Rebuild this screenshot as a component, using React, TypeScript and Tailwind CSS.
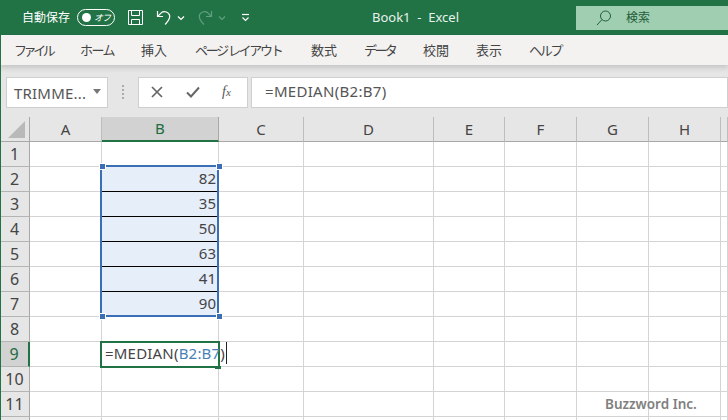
const FONT = "font-['Noto_Sans','Noto_Sans_CJK_JP',sans-serif]";
const TABS: [string, string, string][] = [
    ['ファイル', 'w-[66px]', 'tracking-[-3.4px]'],
    ['ホーム', 'w-[61px]', 'tracking-[-1.6px]'],
    ['挿入', 'w-[54px]', ''],
    ['ページ レイアウト', 'w-[116px]', 'tracking-[-2.3px]'],
    ['数式', 'w-[53px]', ''],
    ['データ', 'w-[59px]', 'tracking-[-2.6px]'],
    ['校閲', 'w-[53px]', ''],
    ['表示', 'w-[53px]', ''],
    ['ヘルプ', 'w-[40px]', 'tracking-[-2.2px]'],
];
const COLUMNS: [string, string][] = [
    ['A', 'w-[72px]'],
    ['B', 'w-[117px]'],
    ['C', 'w-[85px]'],
    ['D', 'w-[130px]'],
    ['E', 'w-[71px]'],
    ['F', 'w-[72px]'],
    ['G', 'w-[72px]'],
    ['H', 'w-[72px]'],
    ['', 'w-[7px]'],
];
const VALUES: Record<number, number> = { 2: 82, 3: 35, 4: 50, 5: 63, 6: 41, 7: 90 };
const ROWS = [1, 2, 3, 4, 5, 6, 7, 8, 9, 10, 11, 12];

function TitleIcons() {
    return (
        <div className="flex items-center">
            <svg width="17" height="17" viewBox="0 0 17 17" fill="none" stroke="#fff" strokeWidth="1" className="ml-[12px]">
                <path d="M1.5 1.5h14v14h-14z" />
                <path d="M4.5 1.5v5h8v-5M4.5 15.5v-5h8v5" />
            </svg>
            <svg width="16" height="18" viewBox="0 0 16 18" fill="none" stroke="#fff" strokeWidth="1.2" className="ml-[12px]">
                <path d="M1.5 2v5.5H7" />
                <path d="M1.8 7.2 5.5 3.6c2.6-2 7.6-.8 8.2 3.2.4 3.2-2 6-4.6 8.7" />
            </svg>
            <svg width="8" height="6" viewBox="0 0 8 6" fill="none" stroke="#fff" strokeWidth="1.2" className="ml-[5px]">
                <path d="M1 1.5 4 4.5 7 1.5" />
            </svg>
            <svg width="16" height="18" viewBox="0 0 16 18" fill="none" stroke="#5f9f7f" strokeWidth="1.2" className="ml-[12px]">
                <path d="M14.5 2v5.5H9" />
                <path d="M14.2 7.2 10.5 3.6c-2.6-2-7.6-.8-8.2 3.2-.4 3.2 2 6 4.6 8.7" />
            </svg>
            <svg width="8" height="6" viewBox="0 0 8 6" fill="none" stroke="#5f9f7f" strokeWidth="1.2" className="ml-[5px]">
                <path d="M1 1.5 4 4.5 7 1.5" />
            </svg>
            <svg width="9" height="9" viewBox="0 0 9 9" fill="none" stroke="#fff" strokeWidth="1.2" className="ml-[15px]">
                <path d="M1 1.5h7" />
                <path d="M1.5 4.5 4.5 7.5 7.5 4.5" />
            </svg>
        </div>
    );
}

function TitleBar() {
    return (
        <div className="h-[35px] shrink-0 bg-[#217346] flex items-center text-white text-[12px]">
            <span className="ml-[22px] w-[55px] whitespace-nowrap">自動保存</span>
            <div className="w-[38px] h-[17px] rounded-full border border-white flex items-center justify-between pl-[4px] pr-[4px]">
                <div className="w-[9px] h-[9px] rounded-full bg-white" />
                <span className="text-[9px] leading-none tracking-[-1px] italic">オフ</span>
            </div>
            <TitleIcons />
            <span className="ml-[122px] w-[204px] whitespace-nowrap text-[13px] text-[#e8f2ec]">Book1 &nbsp;-&nbsp; Excel</span>
            <div className="h-[24px] flex-1 bg-[#9fcfb0] flex items-center text-[#1f5c3c] text-[12px]">
                <svg width="16" height="16" viewBox="0 0 16 16" fill="none" stroke="#1f5c3c" strokeWidth="1" className="ml-[20px]">
                    <circle cx="9.5" cy="6" r="5" />
                    <path d="M6 9.5 1 15" />
                </svg>
                <span className="ml-[14px]">検索</span>
            </div>
        </div>
    );
}

function RibbonTabs() {
    return (
        <div className="h-[30px] shrink-0 bg-[#f3f2f1] flex items-center text-[#444] text-[13px] pl-[14px] pt-[1px] shadow-[0_3px_5px_rgba(0,0,0,0.14)] relative">
            {TABS.map(([label, width, tracking]) => (
                <span key={label} className={`${width} ${tracking} shrink-0 whitespace-nowrap`}>
                    {label}
                </span>
            ))}
        </div>
    );
}

function FormulaBar() {
    return (
        <div className="h-[51px] shrink-0 bg-[#e6e6e6] flex items-center pl-[6px] pt-[1px]">
            <div className="w-[102px] h-[31px] bg-white border border-[#cfcfcf] flex items-center justify-between pl-[7px] pr-[6px] pt-[3px] text-[15px] text-[#555]">
                <span className="whitespace-nowrap tracking-[0.2px]">TRIMME...</span>
                <svg width="8" height="5" viewBox="0 0 8 5" fill="#777" className="mb-[5px]"><path d="M0 0h8L4 5z" /></svg>
            </div>
            <div className="w-[30px] flex flex-col items-center gap-[2px]">
                <div className="w-[2px] h-[2px] bg-[#aaa]" />
                <div className="w-[2px] h-[2px] bg-[#aaa]" />
                <div className="w-[2px] h-[2px] bg-[#aaa]" />
                <div className="w-[2px] h-[2px] bg-[#aaa]" />
            </div>
            <div className="w-[110px] h-[31px] bg-white border border-[#cfcfcf] flex items-center">
                <svg width="12" height="12" viewBox="0 0 12 12" fill="none" stroke="#666" strokeWidth="1.7" className="ml-[12px]">
                    <path d="M1 1l10 10M11 1 1 11" />
                </svg>
                <svg width="14" height="12" viewBox="0 0 14 12" fill="none" stroke="#666" strokeWidth="2" className="ml-[23px]">
                    <path d="M1 6.5 5 10.5 13 1.5" />
                </svg>
                <span className="ml-[22px] font-['Liberation_Serif',serif] italic text-[14px] leading-none text-[#555]">f<span className="text-[11px]">x</span></span>
            </div>
            <div className="ml-[3px] flex-1 h-[31px] bg-white border border-[#cfcfcf] flex items-center pl-[13px] pb-[1px] text-[15px] text-[#555] tracking-[0.3px]">
                =MEDIAN(B2:B7)
            </div>
        </div>
    );
}

function ColumnHeaders() {
    return (
        <div className="h-[25px] shrink-0 bg-[#e6e6e6] flex text-[15px] text-[#444]">
            <div className="w-[30px] shrink-0 border-r border-b border-[#a8a8a8] flex items-end justify-end pr-[4px] pb-[3px]">
                <div className="w-0 h-0 border-l-[17px] border-l-transparent border-b-[17px] border-b-[#b9b9b9]" />
            </div>
            {COLUMNS.map(([name, width]) => (
                <div
                    key={name || 'end'}
                    className={`${width} shrink-0 flex items-center justify-center ${
                        name === 'B'
                            ? 'bg-[#d2d2d2] text-[#1d6b43] border-b-2 border-b-[#217346] border-r border-r-[#a8a8a8]'
                            : 'border-b border-b-[#a8a8a8] border-r border-r-[#bdbdbd]'
                    }`}
                >
                    {name}
                </div>
            ))}
        </div>
    );
}

function Row({ row }: { row: number }) {
    const active = row === 9;
    return (
        <div className="h-[25px] shrink-0 flex">
            <div
                className={`w-[30px] shrink-0 flex items-center justify-center pb-[1px] text-[16px] border-b border-b-[#b4b4b4] ${
                    active
                        ? 'bg-[#d2d2d2] text-[#1d6b43] border-r-2 border-r-[#217346]'
                        : 'bg-[#e6e6e6] text-[#444] border-r border-r-[#a8a8a8]'
                }`}
            >
                {row < 12 && row}
            </div>
            {COLUMNS.map(([name, width]) => {
                const value = name === 'B' ? VALUES[row] : undefined;
                return (
                    <div
                        key={name || 'end'}
                        className={`${width} shrink-0 border-r border-b border-[#d4d4d4] flex items-center justify-end pr-[2px] pb-[1px] text-[15px] text-[#444] ${
                            value !== undefined ? 'bg-[#e6eefa]' : 'bg-white'
                        } ${value !== undefined && row < 7 ? 'border-b-black' : ''}`}
                    >
                        {value}
                    </div>
                );
            })}
        </div>
    );
}

function Handle({ className }: { className: string }) {
    return <div className={`absolute w-[5px] h-[5px] bg-[#3a6fb5] box-content border border-white ${className}`} />;
}

export default function App() {
    return (
        <div className={`${FONT} relative w-[728px] h-[420px] overflow-hidden bg-white flex flex-col`}>
            <TitleBar />
            <RibbonTabs />
            <div className="h-[1px] shrink-0 bg-[#e6e6e6]" />
            <FormulaBar />
            <ColumnHeaders />
            {ROWS.map((row) => (
                <Row key={row} row={row} />
            ))}

            {/* green window edge */}
            <div className="absolute left-0 top-[35px] bottom-0 w-[1px] bg-[#217346]" />

            {/* range selection B2:B7 */}
            <div className="absolute left-[100px] top-[165px] w-[119px] h-[152px] border-2 border-[#3a6fb5]" />
            <Handle className="left-[99px] top-[163px]" />
            <Handle className="left-[216px] top-[163px]" />
            <Handle className="left-[99px] top-[313px]" />
            <Handle className="left-[216px] top-[313px]" />

            {/* cell being edited */}
            <div className="absolute left-[100px] top-[341px] w-[120px] h-[27px] border-2 border-[#217346]" />
            <div className="absolute left-[215px] top-[366px] w-[6px] h-[3px] bg-[#217346]" />
            <div className="absolute left-[105px] top-[341px] h-[24px] flex items-center whitespace-nowrap text-[15px] text-[#444] tracking-[0.2px]">
                =MEDIAN(<span className="text-[#4a7fb5]">B2:B7</span>)
                <span className="ml-[1px] w-[1px] h-[22px] bg-[#222]" />
            </div>

            <div className="absolute left-[605px] top-[394px] text-[13.5px] font-semibold text-[#808080] whitespace-nowrap font-['Noto_Sans',sans-serif]">
                Buzzword Inc.
            </div>
        </div>
    );
}
